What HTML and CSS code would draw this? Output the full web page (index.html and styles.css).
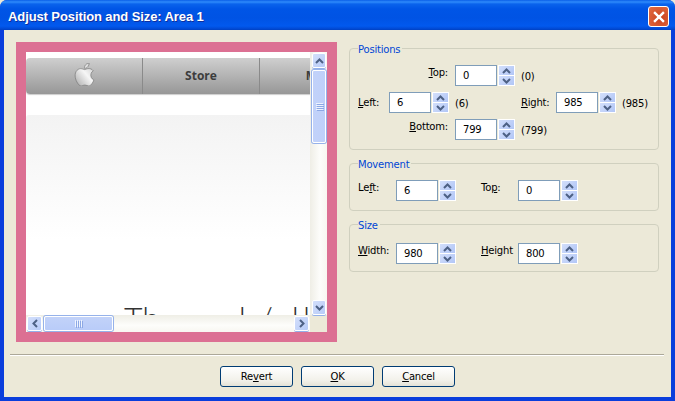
FILE: index.html
```html
<!DOCTYPE html>
<html lang="en">
<head>
<meta charset="utf-8">
<title>Adjust Position and Size: Area 1</title>
<link rel="stylesheet" href="styles.css">
</head>
<body>
<svg class="defs" width="0" height="0" aria-hidden="true">
  <symbol id="chev-up" viewBox="0 0 9 6"><path d="M1 5l3.5-3.5L8 5" fill="none" stroke="#4D6185" stroke-width="2"/></symbol>
  <symbol id="chev-down" viewBox="0 0 9 6"><path d="M1 1l3.5 3.5L8 1" fill="none" stroke="#4D6185" stroke-width="2"/></symbol>
  <symbol id="chev-left" viewBox="0 0 6 9"><path d="M5 1L1.5 4.5 5 8" fill="none" stroke="#4D6185" stroke-width="2"/></symbol>
  <symbol id="chev-right" viewBox="0 0 6 9"><path d="M1 1l3.5 3.5L1 8" fill="none" stroke="#4D6185" stroke-width="2"/></symbol>
</svg>
<div class="window">
  <header class="titlebar">
    <h1 class="title">Adjust Position and Size: Area 1</h1>
    <span class="close"><svg viewBox="0 0 11 11" width="12" height="12"><path d="M1 1l9 9M10 1l-9 9" stroke="#fff" stroke-width="2.2"/></svg></span>
  </header>
  <div class="client">
    <main class="main">
      <section class="preview">
        <div class="viewport">
          <nav class="nav">
            <div class="nav-item nav-apple"><svg width="23" height="23" viewBox="0 0 24 24"><defs><linearGradient id="ag" x1="0" y1="1" x2="1" y2="0"><stop offset="0" stop-color="#A8A8A8"/><stop offset=".55" stop-color="#F6F6F6"/><stop offset="1" stop-color="#C4C4C4"/></linearGradient></defs><path fill="url(#ag)" stroke="#777" stroke-width=".7" d="M12.152 6.896c-.948 0-2.415-1.078-3.96-1.04-2.04.027-3.91 1.183-4.961 3.014-2.117 3.675-.546 9.103 1.519 12.09 1.013 1.454 2.208 3.09 3.792 3.039 1.52-.065 2.09-.987 3.935-.987 1.831 0 2.35.987 3.96.948 1.637-.026 2.676-1.48 3.676-2.948 1.156-1.688 1.636-3.325 1.662-3.415-.039-.013-3.182-1.221-3.22-4.857-.026-3.04 2.48-4.494 2.597-4.559-1.429-2.09-3.623-2.324-4.39-2.376-2-.156-3.675 1.09-4.61 1.09zM15.53 3.83c.843-1.012 1.4-2.427 1.245-3.83-1.207.052-2.662.805-3.532 1.818-.78.896-1.454 2.338-1.273 3.714 1.338.104 2.715-.688 3.559-1.701"/></svg></div>
            <div class="nav-item">Store</div>
            <div class="nav-item">Mac</div>
          </nav>
          <div class="hero">
            <div class="headline"><span>Th</span><span class="headline-end"><span>l</span><span class="slash">/</span><span>l</span><span>l</span></span></div>
          </div>
        </div>
        <div class="vscroll">
          <span class="sb-btn sb-btn-v"><svg width="9" height="6"><use href="#chev-up"/></svg></span>
          <span class="thumb thumb-v"><i></i><i></i><i></i><i></i></span>
          <span class="sb-fill"></span>
          <span class="sb-btn sb-btn-v"><svg width="9" height="6"><use href="#chev-down"/></svg></span>
        </div>
        <div class="hscroll">
          <span class="sb-btn sb-btn-h"><svg width="6" height="9"><use href="#chev-left"/></svg></span>
          <span class="thumb thumb-h"><i></i><i></i><i></i><i></i></span>
          <span class="sb-fill"></span>
          <span class="sb-btn sb-btn-h"><svg width="6" height="9"><use href="#chev-right"/></svg></span>
        </div>
      </section>
      <aside class="panel">
        <fieldset class="group group-positions">
          <legend><span>Positions</span></legend>
          <div class="row row-1">
            <label class="lbl lbl-top"><u>T</u>op:</label>
            <span class="input">0</span>
            <span class="spin"><b><svg width="9" height="6"><use href="#chev-up"/></svg></b><b><svg width="9" height="6"><use href="#chev-down"/></svg></b></span>
            <span class="note">(0)</span>
          </div>
          <div class="row row-2">
            <label class="lbl lbl-left"><u>L</u>eft:</label>
            <span class="input">6</span>
            <span class="spin"><b><svg width="9" height="6"><use href="#chev-up"/></svg></b><b><svg width="9" height="6"><use href="#chev-down"/></svg></b></span>
            <span class="note note-left">(6)</span>
            <label class="lbl lbl-right"><u>R</u>ight:</label>
            <span class="input">985</span>
            <span class="spin"><b><svg width="9" height="6"><use href="#chev-up"/></svg></b><b><svg width="9" height="6"><use href="#chev-down"/></svg></b></span>
            <span class="note">(985)</span>
          </div>
          <div class="row row-3">
            <label class="lbl lbl-bottom"><u>B</u>ottom:</label>
            <span class="input">799</span>
            <span class="spin"><b><svg width="9" height="6"><use href="#chev-up"/></svg></b><b><svg width="9" height="6"><use href="#chev-down"/></svg></b></span>
            <span class="note">(799)</span>
          </div>
        </fieldset>
        <fieldset class="group group-movement">
          <legend><span>Movement</span></legend>
          <div class="row">
            <label class="lbl lbl-a">Le<u>f</u>t:</label>
            <span class="input">6</span>
            <span class="spin"><b><svg width="9" height="6"><use href="#chev-up"/></svg></b><b><svg width="9" height="6"><use href="#chev-down"/></svg></b></span>
            <label class="lbl lbl-b">To<u>p</u>:</label>
            <span class="input">0</span>
            <span class="spin"><b><svg width="9" height="6"><use href="#chev-up"/></svg></b><b><svg width="9" height="6"><use href="#chev-down"/></svg></b></span>
          </div>
        </fieldset>
        <fieldset class="group group-size">
          <legend><span>Size</span></legend>
          <div class="row">
            <label class="lbl lbl-a"><u>W</u>idth:</label>
            <span class="input">980</span>
            <span class="spin"><b><svg width="9" height="6"><use href="#chev-up"/></svg></b><b><svg width="9" height="6"><use href="#chev-down"/></svg></b></span>
            <label class="lbl lbl-b"><u>H</u>eight</label>
            <span class="input">800</span>
            <span class="spin"><b><svg width="9" height="6"><use href="#chev-up"/></svg></b><b><svg width="9" height="6"><use href="#chev-down"/></svg></b></span>
          </div>
        </fieldset>
      </aside>
    </main>
    <hr class="divider">
    <footer class="buttons">
      <button class="btn" type="button">Re<u>v</u>ert</button>
      <button class="btn" type="button"><u>O</u>K</button>
      <button class="btn" type="button"><u>C</u>ancel</button>
    </footer>
  </div>
</div>
</body>
</html>
```
FILE: styles.css
```css
* { box-sizing: border-box; }
html, body { margin: 0; padding: 0; }
body { width: 675px; height: 401px; overflow: hidden; background: #ECE9D8; font: 10px/12px "DejaVu Sans", sans-serif; letter-spacing: -.2px; color: #000; }
.defs { position: absolute; }
.window { width: 675px; height: 401px; display: flex; flex-direction: column; background: #0A3EDC; border-radius: 7px 7px 0 0; overflow: hidden; }
.titlebar { height: 30px; flex: none; display: flex; align-items: center; justify-content: space-between; padding: 3px 6px 0 8px; background: linear-gradient(#0A5FE8 0, #2F8BFB 2px, #0A63EC 4px, #0055E6 9px, #0053E4 18px, #0259EE 26px, #0148D2 29px, #0040C0 30px); }
.title { margin: 0; font: bold 13px/16px "Liberation Sans", sans-serif; letter-spacing: -.1px; color: #fff; text-shadow: 1px 1px 0 #0F2F9E; }
.close { width: 21px; height: 21px; display: flex; align-items: center; justify-content: center; border: 1px solid #fff; border-radius: 3px; background: radial-gradient(circle at 60% 60%, #C9431F, #E2693F 90%); }
.client { flex: 1; margin: 0 4px 4px; background: #ECE9D8; display: flex; flex-direction: column; padding: 12px 7px 0 12px; }
.main { display: flex; gap: 12px; height: 300px; }
.preview { width: 321px; height: 300px; border: 10px solid #DC7093; display: grid; grid-template-columns: 284px 17px; grid-template-rows: 263px 17px; }
.viewport { grid-column: 1; grid-row: 1; overflow: hidden; background: #fff; padding-top: 6px; }
.nav { width: 340px; height: 36px; display: flex; border-radius: 4px 0 0 4px; background: linear-gradient(#CFCFCF, #979797); box-shadow: 0 1px 1px #ccc; }
.nav-item { width: 117px; flex: none; display: flex; align-items: center; justify-content: center; border-right: 1px solid #8A8A8A; font: 700 12px/14px "Open Sans", sans-serif; letter-spacing: 0; color: #3D3D3D; }
.nav-apple { padding-bottom: 3px; }
.hero { margin-top: 21px; height: 200px; background: linear-gradient(#F3F3F3, #FFF 125px); border-radius: 3px 0 0 0; padding-top: 184px; }
.headline { display: flex; font: 300 32px/38px Lato, sans-serif; letter-spacing: 0; color: #333; white-space: nowrap; padding-left: 98px; gap: 79px; }
.headline-end { display: flex; gap: 4px; }
.slash { margin: 0 15px 0 9px; }
.vscroll, .hscroll { display: flex; background: linear-gradient(90deg, #EFEEE6, #FDFDFB 60%, #F8F7F1); }
.vscroll { grid-column: 2; grid-row: 1; flex-direction: column; padding: 1px 1px 0 2px; gap: 2px; }
.hscroll { grid-column: 1; grid-row: 2; padding: 1px; gap: 2px; background: linear-gradient(#EFEEE6, #FDFDFB 60%, #F8F7F1); }
.sb-fill { flex: 1; }
.sb-btn { flex: none; display: flex; align-items: center; justify-content: center; background: linear-gradient(135deg, #D3DFFB, #B7CBF8); border: 1px solid #fff; border-radius: 2px; box-shadow: 0 1px 0 #93B0EA; }
.sb-btn-v { width: 14px; height: 15px; }
.sb-btn-h { width: 15px; height: 15px; }
.thumb { flex: none; display: flex; align-items: center; justify-content: center; border: 1px solid #fff; border-radius: 2px; box-shadow: 0 0 0 1px #96B2EA; }
.thumb i { display: block; background: #EEF3FE; box-shadow: 1px 1px 0 #8CA8E5; }
.thumb-v { width: 14px; height: 73px; flex-direction: column; gap: 1px; background: linear-gradient(90deg, #C2D2F9, #BFD0FA); }
.thumb-v i { width: 7px; height: 1px; }
.thumb-h { width: 69px; height: 15px; gap: 1px; background: linear-gradient(#C2D2F9, #B9CCF9); }
.thumb-h i { width: 1px; height: 7px; }
.panel { width: 310px; display: flex; flex-direction: column; gap: 7px; }
.group { margin: 0; padding: 0 8px; border: 1px solid #D0D0BF; border-radius: 4px; min-width: 0; flex: none; }
legend { padding: 0; line-height: 12px; color: #0046D5; }
legend span { display: block; padding-right: 2px; transform: translateY(2px); }
.group-positions { height: 108px; }
.group-movement, .group-size { height: 54px; }
.row { display: flex; align-items: center; height: 21px; }
.row-1 { margin-top: 11px; }
.row-2, .row-3 { margin-top: 6px; }
.group-movement .row { margin-top: 11px; }
.group-size .row { margin-top: 13px; }
.lbl { display: block; transform: translateY(-3px); }
.lbl-top, .lbl-bottom { width: 97px; text-align: right; padding-right: 7px; }
.lbl-left, .lbl-right { transform: none; }
.lbl-left { width: 31px; }
.lbl-right { width: 35px; }
.lbl-a { width: 38px; }
.lbl-b { width: 37px; margin-left: 25px; }
.input { width: 42px; height: 21px; flex: none; display: flex; align-items: center; padding-left: 7px; background: #fff; border: 1px solid #7F9DB9; }
.spin { flex: none; width: 17px; height: 21px; margin-left: 1px; padding: 1px; display: flex; flex-direction: column; gap: 1px; background: #fff; }
.spin b { flex: 1; display: flex; align-items: center; justify-content: center; background: linear-gradient(135deg, #D3DFFB, #B1C6F7); }
.note { margin-left: 6px; transform: translateY(1px); }
.note-left { width: 66px; }
.divider { margin: 12px 0 0 -6px; height: 2px; width: 654px; border: 0; border-top: 1px solid #ACA899; border-bottom: 1px solid #fff; }
.buttons { display: flex; gap: 8px; padding: 10px 0 0 204px; }
.btn { width: 73px; height: 21px; padding: 0; font: 10px/12px "DejaVu Sans", sans-serif; letter-spacing: -.2px; color: #000; background: linear-gradient(#FFF, #F2F1EA 70%, #E4E2D6); border: 1px solid #003C74; border-radius: 3px; }
```
